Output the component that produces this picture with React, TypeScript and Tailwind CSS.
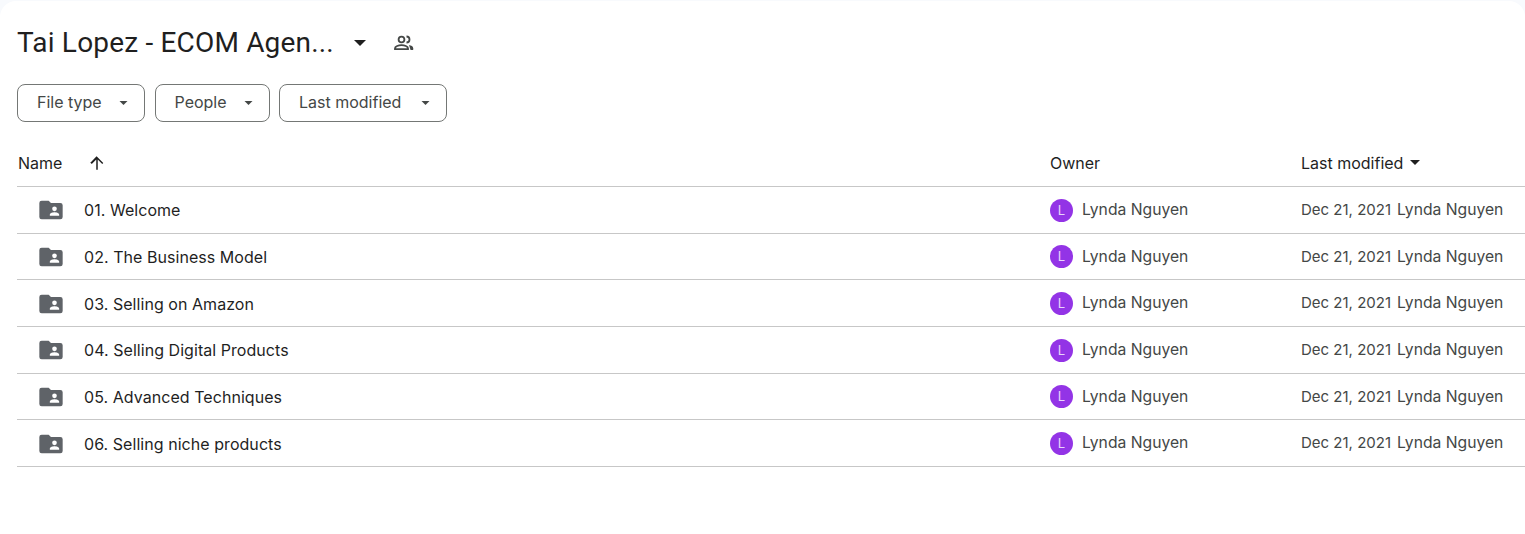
const rows = [
  "01. Welcome",
  "02. The Business Model",
  "03. Selling on Amazon",
  "04. Selling Digital Products",
  "05. Advanced Techniques",
  "06. Selling niche products",
];

function Caret({ className }: { className: string }) {
  return (
    <svg viewBox="0 0 10 5" className={className} fill="currentColor">
      <path d="M0 0h10L5 5z" />
    </svg>
  );
}

function SharedFolder() {
  return (
    <svg viewBox="0 0 24 24" className="h-[28px] w-[28px] text-[#5f6368]" fill="currentColor">
      <path d="M4 4a2 2 0 0 0-2 2v12a2 2 0 0 0 2 2h16a2 2 0 0 0 2-2V8a2 2 0 0 0-2-2h-8l-2-2H4zm11 5a2 2 0 1 1 0 4 2 2 0 0 1 0-4zm4 8h-8v-1c0-1.33 2.67-2 4-2s4 .67 4 2v1z" />
    </svg>
  );
}

function People() {
  return (
    <svg viewBox="0 0 24 24" className="h-[24px] w-[24px] text-[#444746]" fill="none" stroke="currentColor" strokeWidth="1.8">
      <circle cx="9.5" cy="8.5" r="2.9" />
      <path d="M3 18.2v-1c0-1.9 3.6-3 6.5-3s6.5 1.1 6.5 3v1H3z" />
      <path d="M14.5 5.5a3 3 0 0 1 0 6" />
      <path d="M17 13.9c2.2.5 4.2 1.4 4.2 3.3v1.9h-2.6z" fill="currentColor" stroke="none" />
    </svg>
  );
}

function Chip({ label, width }: { label: string; width: string }) {
  return (
    <div className={`flex h-[38px] items-center justify-between rounded-lg border border-[#747775] pb-[3px] pl-[19px] pr-[16px] text-[#444746] ${width}`}>
      <span>{label}</span>
      <Caret className="mt-[3px] h-[4px] w-[9px]" />
    </div>
  );
}

export default function App() {
  return (
    <div className="h-[534px] overflow-hidden bg-[#f8fafd] pt-px font-['Inter',sans-serif] text-[16px]">
      <div className="h-full rounded-t-2xl bg-white pl-[17px]">
        <div className="flex h-[83px] items-center text-[#1f1f1f]">
          <span className="w-[316px] font-['Roboto',sans-serif] text-[28px] leading-9 tracking-[0.18px] whitespace-nowrap">Tai Lopez - ECOM Agen...</span>
          <Caret className="ml-[21px] h-[6px] w-[12px]" />
          <span className="ml-[26px] flex"><People /></span>
        </div>
        <div className="flex gap-[9.5px]">
          <Chip label="File type" width="w-[128px]" />
          <Chip label="People" width="w-[115px]" />
          <Chip label="Last modified" width="w-[168px]" />
        </div>
        <div className="mt-[22px] flex h-[43px] items-center border-b border-[#c7c7c7] pb-[5px] text-[#1f1f1f]">
          <div className="flex w-[1033px] items-center pl-px">
            <span>Name</span>
            <svg viewBox="0 0 24 24" className="ml-[25px] h-[20px] w-[20px]" fill="currentColor">
              <path d="M4.5 12l1.2 1.2 5.4-5.4V20h1.8V7.8l5.4 5.4 1.2-1.2-8-8-7.8 8z" />
            </svg>
          </div>
          <div className="w-[251px]">Owner</div>
          <div className="flex items-center">
            <span>Last modified</span>
            <Caret className="ml-[6px] h-[5px] w-[12px]" />
          </div>
        </div>
        {rows.map((r) => (
          <div key={r} className="flex h-[46.67px] items-center border-b border-[#c7c7c7] pt-[1px]">
            <div className="flex w-[1033px] items-center pl-[20px]">
              <SharedFolder />
              <span className="ml-[19px] tracking-[0.05px] text-[#1f1f1f]">{r}</span>
            </div>
            <div className="flex w-[251px] items-center text-[#444746]">
              <span className="flex h-[23px] w-[23px] items-center justify-center rounded-full bg-[#9334e6] text-[13px] text-[#e8d5fa]">L</span>
              <span className="mb-[1px] ml-[9px] text-[15.7px]">Lynda Nguyen</span>
            </div>
            <div className="mb-[1px] flex items-baseline gap-[6px] whitespace-nowrap text-[#444746]">
              <span className="text-[15px]">Dec 21, 2021</span>
              <span className="text-[15.7px]">Lynda Nguyen</span>
            </div>
          </div>
        ))}
      </div>
    </div>
  );
}
